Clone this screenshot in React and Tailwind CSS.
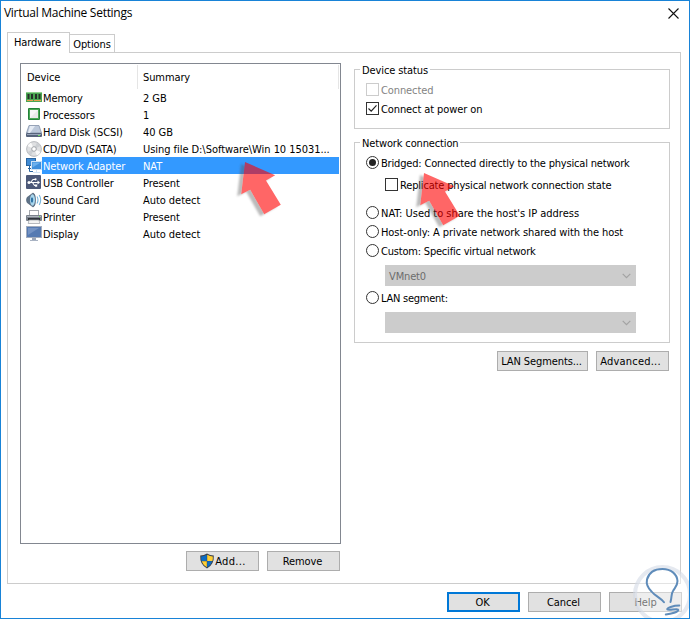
import React, { useState } from 'react';

const DEVICES = [
  { id: 'memory', name: 'Memory', summary: '2 GB', Icon: MemoryIcon },
  { id: 'cpu', name: 'Processors', summary: '1', Icon: CpuIcon },
  { id: 'disk', name: 'Hard Disk (SCSI)', summary: '40 GB', Icon: DiskIcon },
  { id: 'cd', name: 'CD/DVD (SATA)', summary: 'Using file D:\\Software\\Win 10 15031...', Icon: CdIcon },
  { id: 'network', name: 'Network Adapter', summary: 'NAT', Icon: NetworkIcon },
  { id: 'usb', name: 'USB Controller', summary: 'Present', Icon: UsbIcon },
  { id: 'sound', name: 'Sound Card', summary: 'Auto detect', Icon: SoundIcon },
  { id: 'printer', name: 'Printer', summary: 'Present', Icon: PrinterIcon },
  { id: 'display', name: 'Display', summary: 'Auto detect', Icon: DisplayIcon },
];

function MemoryIcon() {
  return (
    <svg width="16" height="16" viewBox="0 0 16 16">
      <rect x="0" y="2" width="16" height="10" fill="#4ba653" />
      <rect x="0" y="2" width="16" height="1" fill="#8fd08f" />
      <path d="M1.500 4h2v5h-2zM5 4h2v5H5zM9 4h2v5H9zM12.500 4h2v5h-2z" fill="#26302a" />
      <path d="M1 10.500h6M8 10.500h7" stroke="#e5a04e" />
    </svg>
  );
}

function CpuIcon() {
  return (
    <svg width="16" height="16" viewBox="0 0 16 16">
      <rect x="2" y="1" width="12" height="12" rx="1" fill="#23823a" />
      <rect x="3" y="2" width="10" height="10" fill="#4aa855" />
      <rect x="4" y="3" width="8" height="8" fill="#e9e9e9" />
      <path d="M4 3h8L4 11z" fill="#f6f6f6" />
    </svg>
  );
}

function DiskIcon() {
  return (
    <svg width="16" height="16" viewBox="0 0 16 16">
      <path d="M3 1.500h10L15.500 9H.5z" fill="#bcc8da" stroke="#8593aa" strokeWidth=".8" />
      <path d="M4 2h5L4 9H2z" fill="#e5ebf4" />
      <rect x="0" y="9" width="16" height="4" rx="1" fill="#56637b" />
      <rect x="1" y="10" width="14" height="1" fill="#98a5ba" />
      <rect x="12" y="11" width="2" height="1" fill="#70e060" />
    </svg>
  );
}

function CdIcon() {
  return (
    <svg width="16" height="16" viewBox="0 0 16 16">
      <circle cx="8" cy="8" r="7.400" fill="#dfe0e2" stroke="#a9acb1" strokeWidth=".8" />
      <path d="M8 8 1.500 5A7 7 0 0 1 5 1.600zM8 8l6.500 3a7 7 0 0 1-3.500 3.400z" fill="#fafafa" />
      <path d="M8 8 11 1.600A7 7 0 0 1 14.500 5zM8 8 5 14.400A7 7 0 0 1 1.500 11z" fill="#cccfd3" />
      <circle cx="8" cy="8" r="2.300" fill="#fff" stroke="#989ca2" strokeWidth=".9" />
    </svg>
  );
}

function NetworkIcon() {
  return (
    <svg width="16" height="16" viewBox="0 0 16 16">
      <rect x=".5" y=".5" width="9" height="7" fill="#3e8ad4" stroke="#2a649f" />
      <path d="M3.500 8v5.500H7M2 10.500h3" fill="none" stroke="#2a649f" />
      <rect x="5.500" y="3.500" width="10" height="8" fill="#3f8edb" stroke="#cfe2f5" />
      <path d="M6.500 4.500h8l-8 5z" fill="#6cb0ee" />
      <path d="M10.500 12v2M7 14.500h7" stroke="#cfe2f5" />
    </svg>
  );
}

function UsbIcon() {
  return (
    <svg width="16" height="16" viewBox="0 0 16 16">
      <rect x="0" y="0" width="15" height="14" rx="1" fill="#4c5878" />
      <path d="M2 7.500h10M4.500 7.500l2.500-3h2M6.500 7.500l2 3H10" fill="none" stroke="#fff" strokeWidth="1.100" />
      <circle cx="3" cy="7.500" r="1.500" fill="#fff" />
      <path d="M11.500 5.500v4l2.500-2z" fill="#fff" />
      <circle cx="9.500" cy="4.300" r="1.100" fill="#fff" />
      <rect x="9" y="9.500" width="2.200" height="2.200" fill="#fff" />
    </svg>
  );
}

function SoundIcon() {
  return (
    <svg width="16" height="16" viewBox="0 0 16 16">
      <path d="M1 5.500 7 1q2.500 1 2.500 7T7 15l-6-4.500Q0 8 1 5.500z" fill="#5f7388" stroke="#42566b" strokeWidth=".6" />
      <ellipse cx="6.500" cy="8" rx="2.500" ry="5.800" fill="#a9d7ee" />
      <ellipse cx="6" cy="8" rx="1.200" ry="2.800" fill="#2f74a6" />
      <path d="M11 4.500q2 3.500 0 7M13.200 3q3 5 0 10" fill="none" stroke="#77b6dd" strokeWidth="1.100" />
    </svg>
  );
}

function PrinterIcon() {
  return (
    <svg width="16" height="16" viewBox="0 0 16 16">
      <rect x="3.500" y="1.500" width="9" height="5" fill="#fff" stroke="#a3a7ad" />
      <rect x="0" y="6" width="16" height="6" rx="1" fill="#7b828c" />
      <rect x="1" y="7" width="14" height="1" fill="#b0b6bf" />
      <rect x="2" y="9" width="12" height="2" fill="#30353c" />
      <path d="M3 11h10l.8 3.500H2.200z" fill="#f3f3f3" stroke="#9a9ea5" strokeWidth=".7" />
      <rect x="13" y="7" width="1" height="1" fill="#72d85e" />
    </svg>
  );
}

function DisplayIcon() {
  return (
    <svg width="16" height="16" viewBox="0 0 16 16">
      <rect x=".5" y=".5" width="15" height="11" fill="#557ab2" stroke="#a3adbe" />
      <path d="M2 2h11L2 9z" fill="#7493c4" />
      <path d="M6 12h4v2H6z" fill="#9aa5b7" />
      <path d="M4 14.500h8" stroke="#a9b3c3" />
    </svg>
  );
}

function ShieldIcon() {
  return (
    <svg width="16" height="16" viewBox="0 0 16 16">
      <path d="M8 .5Q5 2.500 1.200 2.500q-.6 9 6.800 13 7.400-4 6.800-13Q11 2.500 8 .5z" fill="#3c4148" />
      <path d="M7.800 1.800Q5 3.400 2.200 3.500q-.2 2.500.4 4.500h5.200z" fill="#0c6cc4" />
      <path d="M8.200 1.800Q11 3.400 13.800 3.500q.2 2.500-.4 4.500H8.200z" fill="#ffcf33" />
      <path d="M2.700 8.300h5.100v6Q4 12 2.700 8.300z" fill="#ffcf33" />
      <path d="M13.300 8.300H8.200v6Q12 12 13.300 8.300z" fill="#0c6cc4" />
    </svg>
  );
}

function Button({ primary, className = '', children }) {
  return (
    <button
      type="button"
      className={`flex h-5 items-center justify-center bg-[#e1e1e1] whitespace-nowrap ${
        primary ? 'border-2 border-[#0078d7]' : 'border border-[#adadad]'
      } ${className}`}
    >
      {children}
    </button>
  );
}

function Checkbox({ checked, disabled, onChange, className = '', children }) {
  return (
    <label className={`flex h-[13px] items-center gap-0.5 ${disabled ? 'text-[#838383]' : ''} ${className}`}>
      <input type="checkbox" className="sr-only" checked={checked} disabled={disabled} onChange={onChange} />
      <span className={`h-[13px] w-[13px] shrink-0 border bg-white ${disabled ? 'border-[#cccccc]' : 'border-[#333333]'}`}>
        {checked && (
          <svg width="11" height="11" viewBox="0 0 11 11">
            <path d="M1.500 5.500 4.200 8.200 9.500 2.300" fill="none" stroke="#222" strokeWidth="1.200" />
          </svg>
        )}
      </span>
      <span className="pt-0.5">{children}</span>
    </label>
  );
}

function Radio({ value, selected, onSelect, className = '', children }) {
  return (
    <label className={`flex h-[13px] items-center gap-0.5 ${className}`}>
      <input type="radio" name="connection" className="sr-only" checked={selected === value} onChange={() => onSelect(value)} />
      <span className="flex h-[13px] w-[13px] shrink-0 items-center justify-center rounded-full border border-[#333333] bg-white">
        {selected === value && <span className="h-[7px] w-[7px] rounded-full bg-[#222222]" />}
      </span>
      <span className="pt-0.5">{children}</span>
    </label>
  );
}

function Combo({ value, className = '' }) {
  return (
    <div className={`ml-[19px] flex h-[21px] w-[251px] shrink-0 items-center justify-between bg-[#cccccc] pr-[5px] pl-1 text-[#6d6d6d] ${className}`}>
      <span className="pt-0.5">{value}</span>
      <svg width="9" height="6" viewBox="0 0 9 6">
        <path d="M.7.8 4.500 4.600 8.300.8" fill="none" stroke="#a3a3a3" strokeWidth="1.200" />
      </svg>
    </div>
  );
}

function Group({ title, className = '', children }) {
  return (
    <section className={`flex w-[316px] flex-col border border-[#cccccc] pl-[11px] ${className}`}>
      <h2 className="-mt-[6px] -ml-[6px] h-[13px] shrink-0 self-start bg-white px-0.5 leading-[13px]">{title}</h2>
      {children}
    </section>
  );
}

const ARROW_PATH = 'M10 7 40.200 20.300 31 25.500 45.800 49.700 29.200 59.300 15.200 34.700 6.200 39.300z';

function Arrow({ className }) {
  return (
    <svg className={`pointer-events-none absolute ${className}`} width="56" height="68" viewBox="0 0 56 68">
      {/* the shadow only shows outside of the arrow body */}
      <mask id="arrow-outside" maskUnits="userSpaceOnUse" x="0" y="0" width="56" height="68">
        <rect width="56" height="68" fill="#fff" />
        <path d={ARROW_PATH} fill="#000" />
      </mask>
      <g mask="url(#arrow-outside)">
        <path d={ARROW_PATH} className="blur-[1px]" fill="#555" opacity=".4" transform="translate(-4 2)" />
      </g>
      <path d={ARROW_PATH} fill="#f00" opacity=".6" />
    </svg>
  );
}

function BulbBadge() {
  return (
    <svg className="pointer-events-none absolute top-[562px] left-[630px]" width="58" height="55" viewBox="0 0 58 55">
      <circle cx="31.500" cy="31.500" r="27.500" fill="#fff" fillOpacity=".45" stroke="#d4dae6" strokeOpacity=".6" strokeWidth="4" />
      <path
        d="M33 39.300C30 35 24 33 20.500 28.500 17 25 15 21 16 16.500 18 9 24.500 6 31.500 6c8.500 0 14.500 5 15 12 0 5-2.500 6.500-4.500 10-2 3-1 6-2.500 11"
        fill="none"
        stroke="#5f8cba"
        strokeWidth="2"
        strokeLinecap="round"
      />
      <path d="M48.300 42.500c-6 0-13 2.500-12 4s11-1.500 11 .5-7 4-12.500 4.500" fill="none" stroke="#5f8cba" strokeWidth="2" strokeLinecap="round" />
    </svg>
  );
}

export default function App() {
  const [device, setDevice] = useState('network');
  const [connection, setConnection] = useState('bridged');
  const [powerOn, setPowerOn] = useState(true);
  const [replicate, setReplicate] = useState(false);

  return (
    <div className="relative flex h-[619px] w-[690px] flex-col overflow-hidden border border-[#1883d7] bg-white font-['DejaVu_Sans_Condensed','DejaVu_Sans',sans-serif] text-[11px] leading-[13px] tracking-[-0.1px] text-black">
      {/* Title bar */}
      <header className="flex h-[30px] shrink-0 items-start justify-between pt-1 pr-[10px] pl-[3px]">
        <h1 className="font-['Open_Sans','Noto_Sans',sans-serif] text-[12px] leading-4 tracking-[-0.28px]">Virtual Machine Settings</h1>
        <button type="button" aria-label="Close" className="pt-[3px]">
          <svg width="11" height="11" viewBox="0 0 11 11">
            <path d="M.5.500 10.500 10.500M10.500.500.500 10.500" stroke="#111" strokeWidth="1.100" />
          </svg>
        </button>
      </header>

      {/* Tabs */}
      <nav className="flex h-[21px] shrink-0 items-end pl-1.5">
        <button type="button" className="z-10 -mb-px h-[21px] w-[63px] border border-b-0 border-[#cccccc] bg-white pr-0.5 pb-px">Hardware</button>
        <button type="button" className="h-[18px] w-[45px] border border-b-0 border-l-0 border-[#cccccc] bg-white pt-0.5">Options</button>
      </nav>

      <main className="ml-1.5 flex h-[532px] w-[674px] shrink-0 border border-[#cccccc] pl-3">
        {/* Device list */}
        <div className="mt-[10px] w-[321px]">
          <div className="h-[481px] border border-[#828790] p-px">
            <div className="flex h-[24px] items-center">
              <span className="flex h-full w-[116px] items-center border-r border-[#e5e5e5] pl-[5px]">Device</span>
              <span className="flex h-full flex-1 items-center border-r border-[#e5e5e5] pl-[5px]">Summary</span>
            </div>
            {DEVICES.map(({ id, name, summary, Icon }) => (
              <div key={id} className="flex h-[17px] items-end pl-1" onClick={() => setDevice(id)}>
                <span className="h-4 w-4 shrink-0"><Icon /></span>
                <div className={`flex h-full flex-1 items-center pt-px pl-px ${device === id ? 'bg-[#3399ff] text-white' : ''}`}>
                  <span className="w-[100px] whitespace-nowrap">{name}</span>
                  <span className="tracking-[-0.05px] whitespace-nowrap">{summary}</span>
                </div>
              </div>
            ))}
          </div>
          <div className="mt-[7px] flex justify-end gap-2 pr-px">
            <Button className="w-[73px] tracking-[0.35px]"><ShieldIcon />Add...</Button>
            <Button className="w-[73px] pr-0.5">Remove</Button>
          </div>
        </div>

        {/* Adapter settings */}
        <div className="mt-4 ml-[13px]">
          <Group title="Device status" className="h-[60px]">
            <Checkbox className="mt-1.5" disabled checked={false}>Connected</Checkbox>
            <Checkbox className="mt-1.5" checked={powerOn} onChange={() => setPowerOn(!powerOn)}>Connect at power on</Checkbox>
          </Group>
          <Group title="Network connection" className="mt-[13px] h-[201px] tracking-[-0.14px]">
            <Radio value="bridged" selected={connection} onSelect={setConnection} className="mt-1.5 tracking-[-0.18px]">
              Bridged: Connected directly to the physical network
            </Radio>
            <Checkbox className="mt-[9px] ml-[19px] tracking-[-0.17px]" checked={replicate} onChange={() => setReplicate(!replicate)}>
              Replicate physical network connection state
            </Checkbox>
            <Radio value="nat" selected={connection} onSelect={setConnection} className="mt-[15px] tracking-[-0.02px]">
              NAT: Used to share the host's IP address
            </Radio>
            <Radio value="host" selected={connection} onSelect={setConnection} className="mt-1.5 tracking-[-0.08px]">
              Host-only: A private network shared with the host
            </Radio>
            <Radio value="custom" selected={connection} onSelect={setConnection} className="mt-1.5 tracking-[-0.2px]">
              Custom: Specific virtual network
            </Radio>
            <Combo value="VMnet0" className="mt-2" />
            <Radio value="lan" selected={connection} onSelect={setConnection} className="mt-[5px] tracking-[-0.25px]">
              LAN segment:
            </Radio>
            <Combo value="" className="mt-2" />
          </Group>
          <div className="mt-2 flex justify-end gap-2 pr-px">
            <Button className="w-[91px] pr-0.5">LAN Segments...</Button>
            <Button className="w-[73px] pr-1 tracking-[0.2px]">Advanced...</Button>
          </div>
        </div>
      </main>

      {/* Dialog buttons */}
      <footer className="mt-2 flex justify-end gap-2 pr-[7px]">
        <Button primary className="w-[73px] pr-0.5">OK</Button>
        <Button className="w-[73px] pr-0.5">Cancel</Button>
        <Button className="w-[73px]">Help</Button>
      </footer>

      <Arrow className="top-[154px] left-[234px]" />
      <Arrow className="top-[165px] left-[413px]" />
      <BulbBadge />
    </div>
  );
}
